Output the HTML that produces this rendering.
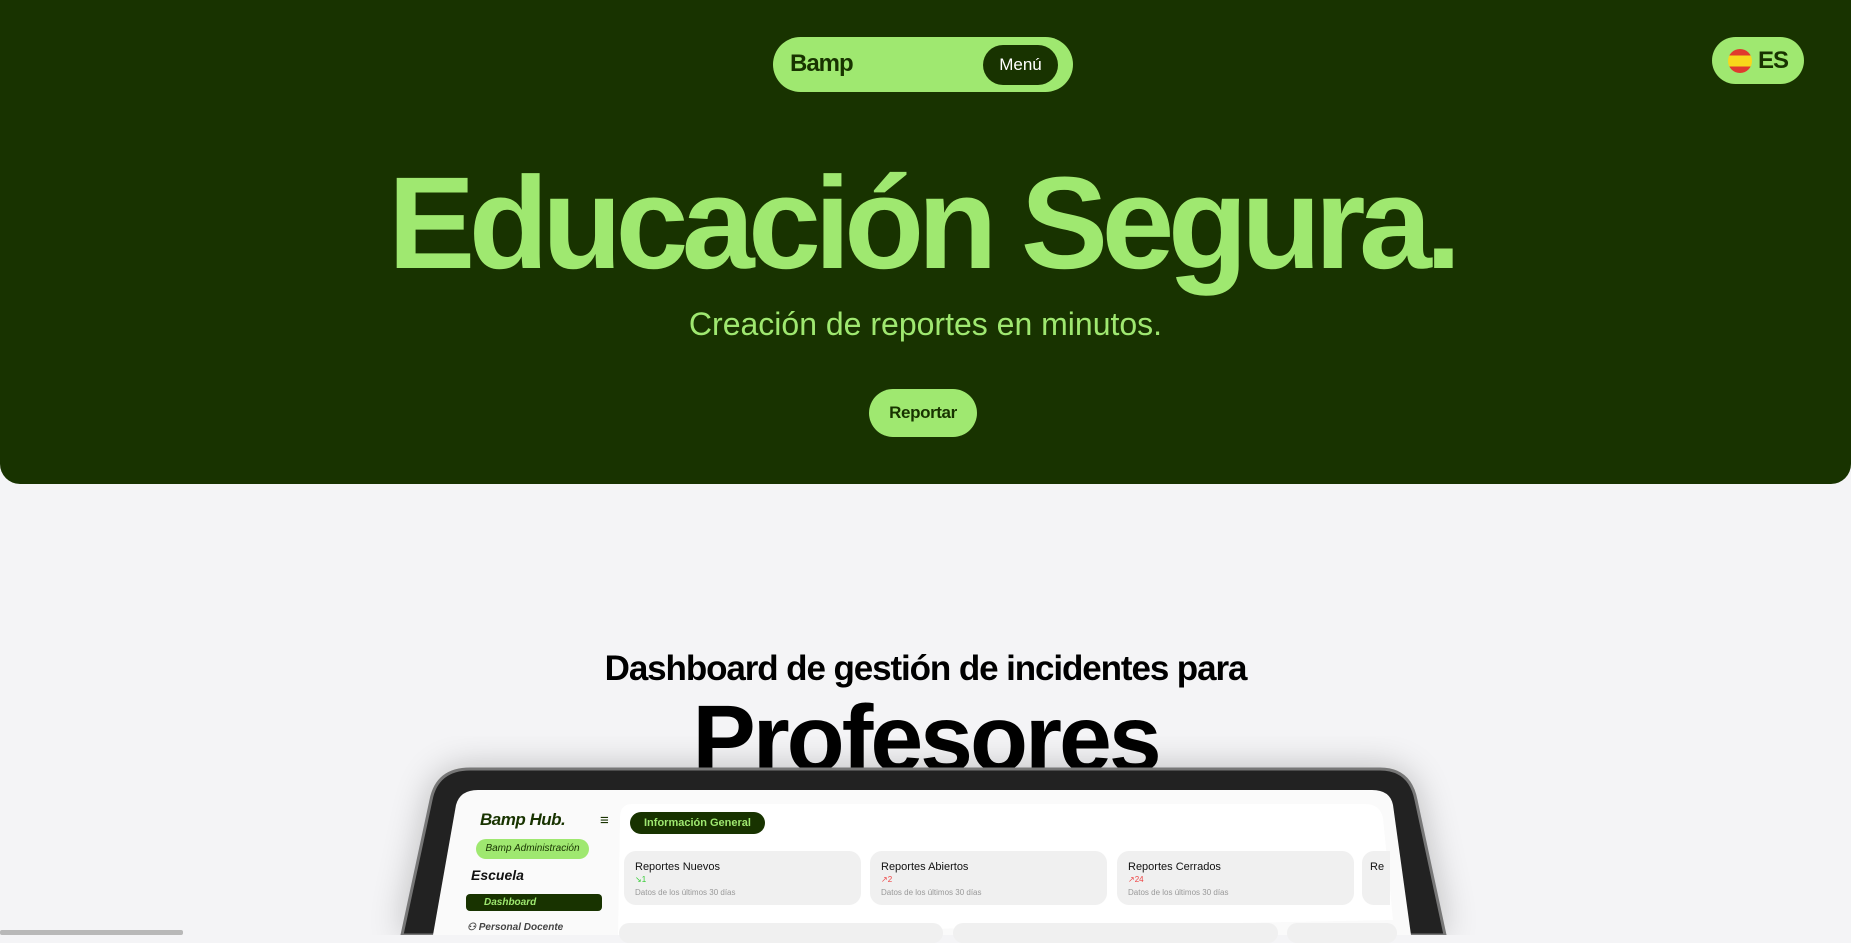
<!DOCTYPE html>
<html><head><meta charset="utf-8"><style>
*{margin:0;padding:0;box-sizing:border-box}
body{width:1851px;height:935px;overflow:hidden;background:#f4f4f6;font-family:"Liberation Sans",sans-serif;position:relative}
.abs{position:absolute}
.hero{left:0;top:0;width:1851px;height:484px;background:#183300;border-radius:0 0 20px 20px}
.g{color:#9fe870}
</style></head><body>
<div class="abs hero"></div>
<div class="abs" style="left:773px;top:37px;width:300px;height:55px;border-radius:28px;background:#9fe870"></div>
<div class="abs" style="left:790px;top:50px;font-size:24px;font-weight:bold;color:#183300;letter-spacing:-1px">Bamp</div>
<div class="abs" style="left:983px;top:45px;width:75px;height:40px;border-radius:20px;background:#183300;color:#fff;font-size:17px;text-align:center;line-height:40px">Menú</div>
<div class="abs" style="left:1712px;top:37px;width:92px;height:47px;border-radius:24px;background:#9fe870"></div>
<div class="abs" style="left:1728px;top:49px;width:24px;height:24px;border-radius:12px;background:linear-gradient(#e03a2e 0 28%,#f8d81b 28% 72%,#e03a2e 72%)"></div>
<div class="abs" style="left:1758px;top:47px;font-size:24px;font-weight:bold;color:#183300;letter-spacing:-1px">ES</div>
<div class="abs g" style="left:0;width:1851px;top:148px;text-align:center;font-size:131px;font-weight:bold;letter-spacing:-6.6px;line-height:150px;padding-right:8px">Educación Segura.</div>
<div class="abs g" style="left:0;width:1851px;top:305px;text-align:center;font-size:32px;line-height:38px">Creación de reportes en minutos.</div>
<div class="abs" style="left:869px;top:389px;width:108px;height:48px;border-radius:24px;background:#9fe870;color:#183300;font-size:17px;font-weight:bold;letter-spacing:-.4px;text-align:center;line-height:48px">Reportar</div>
<div class="abs" style="left:0;width:1851px;top:649px;text-align:center;font-size:35px;font-weight:bold;letter-spacing:-1.1px;color:#000">Dashboard de gestión de incidentes para</div>
<div class="abs" style="left:0;width:1851px;top:684px;text-align:center;font-size:95px;font-weight:bold;letter-spacing:-3px;color:#000;line-height:110px">Profesores</div>
<svg class="abs" style="left:0;top:0" width="1851" height="935">
<defs><filter id="s" x="-20%" y="-20%" width="140%" height="160%"><feGaussianBlur stdDeviation="18"/></filter></defs>
<path d="M470 769 L1380 769 Q1410 769 1416 800 L1445 935 L402 935 L431 800 Q437 769 470 769Z" fill="#000" opacity=".25" filter="url(#s)"/>
<path d="M470 769 L1380 769 Q1410 769 1416 800 L1445 935 L402 935 L431 800 Q437 769 470 769Z" fill="#222" stroke="#777" stroke-width="3"/>
<path d="M478 790 L1372 790 Q1390 790 1393 805 L1411 935 L433 935 L456 805 Q460 790 478 790Z" fill="#fafafa"/>
<path d="M632 804 L1365 804 Q1380 804 1383 818 L1393 920 L618 935 L620 818 Q620 804 632 804Z" fill="#fff"/>
</svg>
<div class="abs" style="left:480px;top:810px;font-size:17px;font-weight:bold;font-style:italic;color:#183300;letter-spacing:-.5px">Bamp Hub.</div>
<div class="abs" style="left:600px;top:812px;font-size:15px;font-weight:bold;color:#183300">≡</div>
<div class="abs" style="left:476px;top:839px;width:113px;height:20px;border-radius:10px;background:#9fe870;font-size:10px;font-style:italic;text-align:center;line-height:20px;color:#183300">Bamp Administración</div>
<div class="abs" style="left:471px;top:867px;font-size:14px;font-weight:bold;font-style:italic;color:#111">Escuela</div>
<div class="abs" style="left:466px;top:894px;width:136px;height:17px;border-radius:4px;background:#183300;color:#9fe870;font-size:10px;font-weight:bold;font-style:italic;line-height:17px;padding-left:18px">Dashboard</div>
<div class="abs" style="left:467px;top:922px;font-size:10px;font-style:italic;font-weight:bold;color:#444">⚇ Personal Docente</div>
<div class="abs" style="left:630px;top:812px;width:135px;height:22px;border-radius:11px;background:#183300;color:#9fe870;font-size:11px;font-weight:bold;line-height:22px;text-align:center">Información General</div>
<div class="abs" style="left:624px;top:851px;width:237px;height:54px;border-radius:12px;background:#f0f0f0;padding:10px 11px;font-size:11px;line-height:12px;color:#111">Reportes Nuevos<br><span style="color:#3c3;font-size:8px">↘1</span><br><span style="color:#999;font-size:8px">Datos de los últimos 30 días</span></div>
<div class="abs" style="left:870px;top:851px;width:237px;height:54px;border-radius:12px;background:#f0f0f0;padding:10px 11px;font-size:11px;line-height:12px;color:#111">Reportes Abiertos<br><span style="color:#e44;font-size:8px">↗2</span><br><span style="color:#999;font-size:8px">Datos de los últimos 30 días</span></div>
<div class="abs" style="left:1117px;top:851px;width:237px;height:54px;border-radius:12px;background:#f0f0f0;padding:10px 11px;font-size:11px;line-height:12px;color:#111">Reportes Cerrados<br><span style="color:#e44;font-size:8px">↗24</span><br><span style="color:#999;font-size:8px">Datos de los últimos 30 días</span></div>
<div class="abs" style="left:1362px;top:851px;width:28px;height:54px;border-radius:12px 0 0 12px;background:#f0f0f0;padding:10px 8px;font-size:11px;color:#111;overflow:hidden">Re</div>
<div class="abs" style="left:619px;top:923px;width:324px;height:20px;border-radius:12px;background:#f0f0f0"></div>
<div class="abs" style="left:953px;top:923px;width:325px;height:20px;border-radius:12px;background:#f0f0f0"></div>
<div class="abs" style="left:1287px;top:923px;width:110px;height:20px;border-radius:12px;background:#f0f0f0"></div>
<div class="abs" style="left:0;top:930px;width:183px;height:5px;background:#b8b8b8;border-radius:2px"></div>
</body></html>
